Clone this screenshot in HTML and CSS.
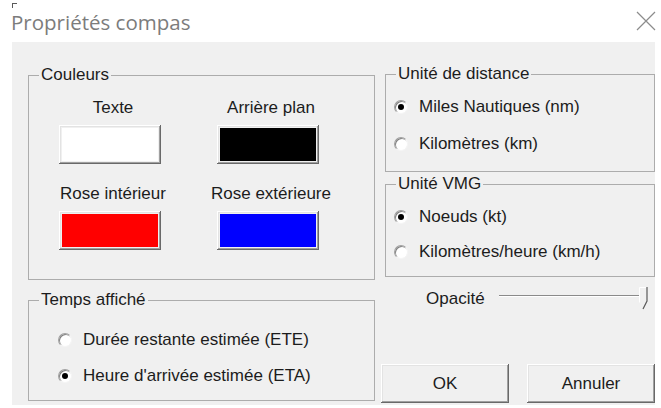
FILE: index.html
```html
<!DOCTYPE html>
<html lang="fr">
<head>
<meta charset="utf-8">
<title>Propriétés compas</title>
<link rel="stylesheet" href="styles.css">
</head>
<body>
<div class="window">
  <header class="titlebar">
    <span class="title">Propriétés compas</span>
    <svg class="close" width="20" height="20" viewBox="0 0 20 20" aria-label="Fermer">
      <path d="M1 1 L19 19 M19 1 L1 19" stroke="#8c8c8c" stroke-width="1.2" fill="none"/>
    </svg>
  </header>

  <main class="client">
    <div class="col-left">
      <fieldset class="group colors">
        <legend>Couleurs</legend>
        <div class="swatches">
          <div class="swatch">
            <span class="swatch-label">Texte</span>
            <button class="swatch-btn"><span class="fill fill-white"></span></button>
          </div>
          <div class="swatch">
            <span class="swatch-label">Arrière plan</span>
            <button class="swatch-btn"><span class="fill fill-black"></span></button>
          </div>
          <div class="swatch">
            <span class="swatch-label">Rose intérieur</span>
            <button class="swatch-btn"><span class="fill fill-red"></span></button>
          </div>
          <div class="swatch">
            <span class="swatch-label">Rose extérieure</span>
            <button class="swatch-btn"><span class="fill fill-blue"></span></button>
          </div>
        </div>
      </fieldset>

      <fieldset class="group time">
        <legend>Temps affiché</legend>
        <div class="radios">
          <label class="radio"><span class="dot"></span>Durée restante estimée (ETE)</label>
          <label class="radio"><span class="dot checked"></span>Heure d'arrivée estimée (ETA)</label>
        </div>
      </fieldset>
    </div>

    <div class="col-right">
      <fieldset class="group distance">
        <legend>Unité de distance</legend>
        <div class="radios">
          <label class="radio"><span class="dot checked"></span>Miles Nautiques (nm)</label>
          <label class="radio"><span class="dot"></span>Kilomètres (km)</label>
        </div>
      </fieldset>

      <fieldset class="group vmg">
        <legend>Unité VMG</legend>
        <div class="radios">
          <label class="radio"><span class="dot checked"></span>Noeuds (kt)</label>
          <label class="radio"><span class="dot"></span>Kilomètres/heure (km/h)</label>
        </div>
      </fieldset>

      <div class="opacity">
        <span class="opacity-label">Opacité</span>
        <div class="slider">
          <div class="track"></div>
          <svg class="thumb" width="9" height="23" viewBox="0 0 9 23">
            <path d="M0.5 0.5 H8 V14 L4 22 L0.5 15.5 Z" fill="#f0f0f0"/>
            <path d="M0.5 15.5 V0.5 H8" stroke="#ffffff" fill="none"/>
            <path d="M8 0 V14 L4 22" stroke="#5a5a5a" stroke-width="1.2" fill="none"/>
          </svg>
        </div>
      </div>

      <div class="actions">
        <button class="btn">OK</button>
        <button class="btn">Annuler</button>
      </div>
    </div>
  </main>
</div>
</body>
</html>
```
FILE: styles.css
```css
* {
  box-sizing: border-box;
}

html,
body {
  margin: 0;
}

body {
  width: 661px;
  height: 408px;
  overflow: hidden;
  background: #ffffff;
  font-family: "Liberation Sans", Arial, sans-serif;
  font-size: 17px;
  color: #1c1c1c;
}

/* Title bar */
.titlebar {
  position: relative;
  height: 42px;
  display: flex;
  align-items: center;
  justify-content: space-between;
  padding: 2px 5px 0 11px;
}

.titlebar::before {
  content: "";
  position: absolute;
  left: 12px;
  top: 3px;
  width: 4px;
  height: 4px;
  border-top: 1px solid #5a5a5a;
  border-left: 1px solid #5a5a5a;
}

.title {
  font-family: "Open Sans", "Noto Sans", sans-serif;
  font-size: 20.5px;
  line-height: 28px;
  color: #7c7c7c;
}

.close {
  display: block;
  margin-top: -2px;
}

/* Dialog body */
.client {
  margin-left: 12px;
  width: 643px;
  height: 363px;
  background: #f0f0f0;
  display: flex;
  gap: 10px;
  padding: 22px 0 0 16px;
}

.col-left {
  width: 347px;
  display: flex;
  flex-direction: column;
}

.col-right {
  width: 270px;
  display: flex;
  flex-direction: column;
}

/* Group boxes */
.group {
  margin: 0;
  min-width: 0;
  border: 1px solid #acacac;
  padding: 0 0 0 8px;
}

.group legend {
  margin-left: 2px;
  padding: 0 2px;
  font-size: 17px;
  line-height: 20px;
}

.colors {
  margin-top: 1px;
}

.time {
  margin-top: 10px;
}

.vmg {
  margin-top: 2px;
}

/* Colour pickers */
.swatches {
  display: grid;
  grid-template-columns: 140px 140px;
  column-gap: 18px;
  row-gap: 20px;
  padding: 13px 0 29px 6px;
}

.swatch {
  display: flex;
  flex-direction: column;
  align-items: center;
  gap: 7px;
}

.swatch-label {
  line-height: 20px;
  white-space: nowrap;
}

.swatch-btn {
  display: block;
  width: 102px;
  height: 39px;
  margin-right: 6px;
  padding: 3px;
  border: none;
  background: #f0f0f0;
  box-shadow:
    inset -1px -1px 0 #696969,
    inset 1px 1px 0 #ffffff,
    inset -2px -2px 0 #a0a0a0,
    inset 2px 2px 0 #e3e3e3;
}

.fill {
  display: block;
  width: 100%;
  height: 100%;
}

.fill-white { background: #ffffff; }
.fill-black { background: #000000; }
.fill-red { background: #ff0000; }
.fill-blue { background: #0000ff; }

/* Radio buttons */
.radios {
  display: flex;
  flex-direction: column;
}

.distance .radios {
  padding: 13px 0 17px;
  gap: 17px;
}

.vmg .radios {
  padding: 13px 0 14px;
  gap: 15px;
}

.time .radios {
  padding: 20px 0 14px 21px;
  gap: 16px;
}

.radio {
  display: flex;
  align-items: center;
  gap: 11px;
  height: 20px;
  line-height: 20px;
  white-space: nowrap;
}

.dot {
  position: relative;
  flex: 0 0 14px;
  width: 14px;
  height: 14px;
  border-radius: 50%;
  background: #ffffff;
  border: 1px solid;
  border-color: #a0a0a0 #f4f4f4 #f4f4f4 #a0a0a0;
  box-shadow: inset 1px 1px 0 #808080;
}

.dot.checked::after {
  content: "";
  position: absolute;
  left: 3px;
  top: 3px;
  width: 6px;
  height: 6px;
  border-radius: 50%;
  background: #000000;
}

/* Opacity slider */
.opacity {
  margin-top: 10px;
  height: 23px;
  display: flex;
  align-items: center;
  gap: 14px;
  padding: 0 7px 0 41px;
}

.opacity-label {
  line-height: 20px;
}

.slider {
  flex: 1;
  display: flex;
  align-items: flex-start;
  height: 23px;
}

.track {
  flex: 1;
  margin-top: 8px;
  height: 2px;
  border-top: 1px solid #8a8a8a;
  border-bottom: 1px solid #ffffff;
}

.thumb {
  display: block;
  margin-left: -2px;
}

/* Dialog buttons */
.actions {
  margin: 54px 0 0 -4px;
  display: flex;
  gap: 18px;
}

.btn {
  width: 128px;
  height: 39px;
  border: none;
  padding: 0;
  background: #f0f0f0;
  font-family: "Liberation Sans", Arial, sans-serif;
  font-size: 17px;
  color: #1c1c1c;
  box-shadow:
    inset -1px -1px 0 #696969,
    inset 1px 1px 0 #ffffff,
    inset -2px -2px 0 #a0a0a0,
    inset 2px 2px 0 #e3e3e3;
}
```
